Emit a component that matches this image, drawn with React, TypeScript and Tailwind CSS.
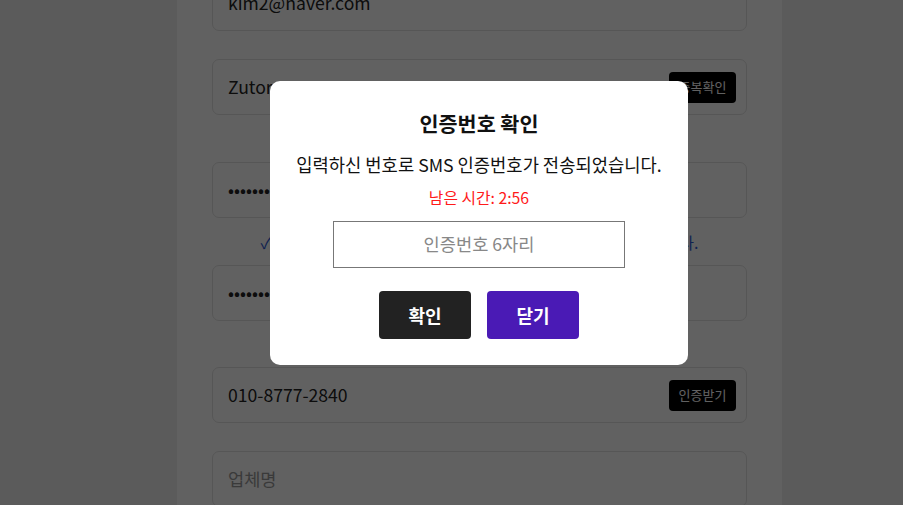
import React from "react";

const font = { fontFamily: '"Noto Sans CJK KR", "Noto Sans", sans-serif' };

function Field({ children, button, placeholder }: { children?: React.ReactNode; button?: string; placeholder?: boolean }) {
  return (
    <div className="h-[56px] shrink-0 rounded-[7px] border border-[#e2e2e2] bg-white flex items-center pl-[15px] pr-[10px] justify-between">
      <span className={`text-[17.6px] ${placeholder ? "text-[#999]" : "text-[#222]"}`}>{children}</span>
      {button && (
        <span className="h-[31px] w-[67px] rounded-[4px] bg-black text-white text-[13px] flex items-center justify-center">
          {button}
        </span>
      )}
    </div>
  );
}

export default function App() {
  return (
    <div className="relative w-[903px] h-[505px] overflow-hidden bg-[#efefef]" style={font}>
      <div className="ml-[177px] w-[605px] h-full bg-white px-[35px] flex flex-col overflow-hidden">
        <div className="flex flex-col -mt-[25px]">
          <Field>kim2@naver.com</Field>
          <div className="h-[28px] shrink-0" />
          <Field button="중복확인">Zutor</Field>
          <div className="h-[47px] shrink-0" />
          <Field><span className="tracking-[0px]">•••••••••••</span></Field>
          <div className="h-[47px] shrink-0 flex items-center justify-center">
            <div className="w-[438px] flex items-center justify-between whitespace-nowrap text-[#2f5bd3] text-[16px]">
              <span className="text-[17px]">✓</span>
              <span>영문, 숫자, 특수문자 포함 8자 이상 사용 가능한 비밀번호입니다.</span>
            </div>
          </div>
          <Field><span className="tracking-[0px]">•••••••••••</span></Field>
          <div className="h-[46px] shrink-0" />
          <Field button="인증받기">010-8777-2840</Field>
          <div className="h-[28px] shrink-0" />
          <Field placeholder>업체명</Field>
        </div>
      </div>

      <div className="absolute inset-0 bg-black/[0.62]" />

      <div className="absolute left-[270px] top-[81px] w-[418px] rounded-[10px] bg-white flex flex-col items-center pt-[27px] pb-[26px]">
        <div className="text-[20.7px] leading-[30px] font-bold text-[#111]">인증번호 확인</div>
        <div className="mt-[13px] text-[17.7px] leading-[26px] text-[#111]">입력하신 번호로 SMS 인증번호가 전송되었습니다.</div>
        <div className="mt-[10px] text-[15.8px] leading-[22px] text-[#ff1a1a]">남은 시간: 2:56</div>
        <div className="mt-[12px] w-[292px] h-[47px] border border-[#777] flex items-center justify-center text-[17.6px] text-[#888]">
          인증번호 6자리
        </div>
        <div className="mt-[23px] flex gap-[16px]">
          <button className="w-[92px] h-[48px] rounded-[4px] bg-[#222] text-white text-[18px] font-bold">확인</button>
          <button className="w-[92px] h-[48px] rounded-[4px] bg-[#4a1ab5] text-white text-[18px] font-bold">닫기</button>
        </div>
      </div>
    </div>
  );
}
